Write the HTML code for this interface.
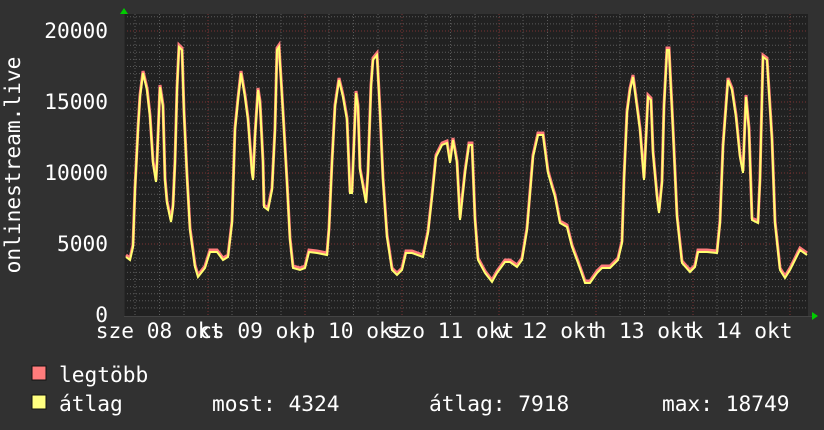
<!DOCTYPE html>
<html><head><meta charset="utf-8"><style>
html,body{margin:0;padding:0;background:#313131;}
svg{display:block}
text{font-family:"DejaVu Sans Mono","Liberation Mono",monospace;fill:#fff;font-size:21.2px}
</style></head><body>
<svg width="824" height="430" viewBox="0 0 824 430" xmlns="http://www.w3.org/2000/svg">
<rect width="824" height="430" fill="#313131"/>
<rect x="124" y="14" width="684" height="302" fill="#212121"/>
<path stroke="#5a5a5a" stroke-width="1" stroke-dasharray="1,2" fill="none" d="M124 307.9H808M124 300.8H808M124 293.7H808M124 286.6H808M124 279.5H808M124 272.4H808M124 265.3H808M124 258.2H808M124 251.1H808M124 236.9H808M124 229.8H808M124 222.7H808M124 215.6H808M124 208.5H808M124 201.4H808M124 194.3H808M124 187.2H808M124 180.1H808M124 165.9H808M124 158.8H808M124 151.7H808M124 144.6H808M124 137.5H808M124 130.4H808M124 123.3H808M124 116.2H808M124 109.1H808M124 94.9H808M124 87.8H808M124 80.7H808M124 73.6H808M124 66.5H808M124 59.4H808M124 52.3H808M124 45.2H808M124 38.1H808M124 23.9H808M124 16.8H808
M135 14V316M159.5 14V316M184 14V316M232 14V316M256.5 14V316M281 14V316M329 14V316M353.5 14V316M378 14V316M426 14V316M450.5 14V316M475 14V316M523 14V316M547.5 14V316M572 14V316M620 14V316M644.5 14V316M669 14V316M717 14V316M741.5 14V316M766 14V316"/>
<path stroke="#7a3333" stroke-width="1" stroke-dasharray="1,2" fill="none" d="M124 244H808M124 173H808M124 102H808M124 31H808M208 14V316M305 14V316M402 14V316M499 14V316M596 14V316M693 14V316M790 14V316"/>
<line x1="124" y1="316.5" x2="812" y2="316.5" stroke="#444" stroke-width="1"/>
<line x1="124.5" y1="12" x2="124.5" y2="316" stroke="#2a2a2a" stroke-width="1"/>
<defs><polyline id="d" fill="none" stroke-linejoin="miter" points="126,257 130,260 133,247 135,190 138,130 140,97 143,73 147,90 150,117 153,163 156,182 157,163 160,87 163,107 165,180 167,203 171,222 173,207 175,163 177,90 179,47 182,50 184,113 187,177 190,230 195,267 198,277 205,268 210,252 217,252 223,260 228,257 232,223 235,130 238,100 241,73 245,97 248,120 252,173 253,180 255,137 258,90 260,103 263,163 264,207 268,210 272,190 275,130 277,50 279,47 283,113 287,183 290,240 293,268 300,270 305,268 309,252 317,253 327,255 329,230 332,163 335,107 339,80 343,97 347,120 350,193 352,193 356,93 358,107 360,170 366,203 368,173 371,87 373,60 377,55 380,113 383,180 387,237 392,270 397,275 402,270 406,253 412,253 423,257 428,233 432,197 436,157 442,145 447,143 450,163 453,140 457,163 460,220 465,173 469,145 472,145 475,220 478,260 485,273 492,282 497,273 505,262 510,262 517,267 522,260 527,230 533,157 538,135 543,135 548,173 552,187 555,197 560,223 567,227 572,247 578,263 585,283 590,283 597,273 602,268 610,268 618,260 622,243 624,180 627,113 630,90 633,77 637,107 640,130 644,180 648,97 651,100 653,153 657,197 659,213 662,183 664,107 667,50 669,50 673,130 677,217 682,263 690,272 695,267 698,252 707,252 717,253 720,223 723,147 728,80 732,90 736,117 740,157 743,173 746,97 749,130 752,220 758,223 760,180 763,57 767,60 772,140 775,223 780,270 785,278 790,270 795,260 800,250 807,255"/></defs>
<use href="#d" stroke="#ff7b7b" stroke-width="3" transform="translate(0,-2)"/>
<use href="#d" stroke="#ffff70" stroke-width="2"/>
<polygon points="120,14 124,8 128,14" fill="#0c0"/>
<polygon points="812,312 818,316 812,320" fill="#0c0"/>
<g text-anchor="end">
<text x="108" y="38">20000</text>
<text x="108" y="109">15000</text>
<text x="108" y="180">10000</text>
<text x="108" y="251">5000</text>
<text x="108" y="322">0</text>
</g>
<text transform="translate(20,165) rotate(-90)" text-anchor="middle">onlinestream.live</text>
<g text-anchor="middle">
<text x="159.5" y="338">sze 08 okt</text>
<text x="256.5" y="338">cs 09 okt</text>
<text x="353.5" y="338">p 10 okt</text>
<text x="450.5" y="338">szo 11 okt</text>
<text x="547.5" y="338">v 12 okt</text>
<text x="644.5" y="338">h 13 okt</text>
<text x="741.5" y="338">k 14 okt</text>
</g>
<rect x="32" y="366" width="14" height="14" fill="#ff7b7b" stroke="#111" stroke-width="1"/>
<rect x="32" y="395" width="14" height="14" fill="#ffff80" stroke="#111" stroke-width="1"/>
<text x="59" y="382">legtöbb</text>
<text x="59" y="411">átlag</text>
<text x="212" y="411">most: 4324</text>
<text x="429" y="411">átlag: 7918</text>
<text x="662" y="411">max: 18749</text>
</svg>
</body></html>
